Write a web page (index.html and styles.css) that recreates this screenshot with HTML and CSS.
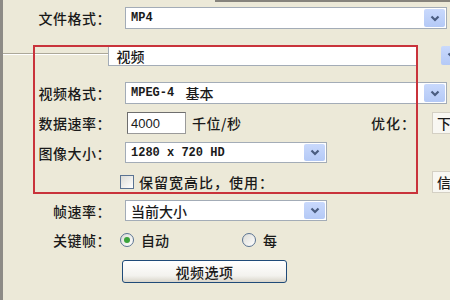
FILE: index.html
```html
<!DOCTYPE html>
<html lang="zh-CN">
<head>
    <meta charset="UTF-8">
    <meta name="viewport" content="width=device-width, initial-scale=1.0">
    <title>视频设置</title>
    <link rel="stylesheet" href="styles.css">
</head>
<body>
    <div class="panel">
        <!-- 文件格式 -->
        <div class="row row-file">
            <span class="label">文件格式：</span>
            <div class="select select-wide">
                <span class="value mono">MP4</span>
                <span class="drop"><svg width="10" height="7" viewBox="0 0 10 7"><path d="M1.5 1.5l3.5 3.5l3.5-3.5" fill="none" stroke="#4a5d80" stroke-width="2.2"/></svg></span>
            </div>
        </div>

        <!-- 分组 -->
        <div class="row row-group">
            <div class="rule"></div>
            <div class="select select-group">
                <span class="value">视频</span>
            </div>
            <span class="drop drop-loose"><svg width="10" height="7" viewBox="0 0 10 7"><path d="M1.5 1.5l3.5 3.5l3.5-3.5" fill="none" stroke="#4a5d80" stroke-width="2.2"/></svg></span>
        </div>

        <div class="row row-vformat">
            <span class="label">视频格式：</span>
            <div class="select select-wide">
                <span class="value mono">MPEG-4 <span class="cjk">基本</span></span>
                <span class="drop"><svg width="10" height="7" viewBox="0 0 10 7"><path d="M1.5 1.5l3.5 3.5l3.5-3.5" fill="none" stroke="#4a5d80" stroke-width="2.2"/></svg></span>
            </div>
        </div>

        <div class="row row-rate">
            <span class="label">数据速率：</span>
            <div class="textbox">4000</div>
            <span class="unit">千位/秒</span>
            <span class="label-right">优化：</span>
            <div class="side-box">下</div>
        </div>

        <div class="row row-size">
            <span class="label">图像大小：</span>
            <div class="select select-mid">
                <span class="value mono">1280 x 720 HD</span>
                <span class="drop"><svg width="10" height="7" viewBox="0 0 10 7"><path d="M1.5 1.5l3.5 3.5l3.5-3.5" fill="none" stroke="#4a5d80" stroke-width="2.2"/></svg></span>
            </div>
        </div>

        <div class="row row-keep">
            <span class="label"></span>
            <span class="checkbox"></span>
            <span class="check-text">保留宽高比，使用：</span>
            <div class="side-box side-box-far">信</div>
        </div>

        <div class="row row-fps">
            <span class="label">帧速率：</span>
            <div class="select select-mid">
                <span class="value">当前大小</span>
                <span class="drop"><svg width="10" height="7" viewBox="0 0 10 7"><path d="M1.5 1.5l3.5 3.5l3.5-3.5" fill="none" stroke="#4a5d80" stroke-width="2.2"/></svg></span>
            </div>
        </div>

        <div class="row row-key">
            <span class="label">关键帧：</span>
            <span class="radio checked"></span>
            <span class="radio-text">自动</span>
            <span class="radio radio-second"></span>
            <span class="radio-text">每</span>
        </div>

        <div class="row row-btn">
            <span class="label"></span>
            <button class="btn">视频选项</button>
        </div>
    </div>

    <!-- 红框标注 -->
    <div class="highlight"></div>
</body>
</html>
```

FILE: styles.css
```css
body {
    margin: 0;
    width: 450px;
    height: 300px;
    overflow: hidden;
    background: linear-gradient(#86837c, #86837c) no-repeat 215px 0 / 100% 2px, #ece9d8;
    font-family: "Noto Sans CJK SC", sans-serif;
    font-size: 14px;
    font-weight: 500;
    color: #1a1a1a;
    line-height: 1;
}
.panel {
    width: 459px;
    height: 300px;
    border-left: 3px solid #8d8b86;
    display: flex;
    flex-direction: column;
}
.row {
    display: flex;
    align-items: center;
    height: 22px;
    flex-shrink: 0;
}
.row-file { margin-top: 7px; }
.row-group { margin-top: 16px; height: 21px; }
.row-vformat { margin-top: 16px; }
.row-rate { margin-top: 8px; }
.row-size { margin-top: 8px; height: 21px; }
.row-keep { margin-top: 8px; height: 21px; }
.row-fps { margin-top: 8px; height: 21px; }
.row-key { margin-top: 10px; height: 18px; }
.row-btn { margin-top: 11px; height: 23px; }

.label {
    width: 108px;
    margin-right: 9px;
    text-align: right;
    letter-spacing: 0.5px;
    flex-shrink: 0;
}

/* 下拉框 */
.select {
    display: flex;
    height: 100%;
    box-sizing: border-box;
    border: 1px solid #a3acb7;
    background: #fff;
    margin-left: 5px;
}
.select .value {
    flex: 1;
    display: flex;
    align-items: center;
    padding-left: 5px;
    white-space: pre;
}
.select-wide { width: 322px; }
.select-mid { width: 202px; }
.select-group {
    width: 310px;
    margin-left: 0;
    border-right: none;
}
.select-group .value { padding-left: 8px; }
.mono {
    font-family: "Liberation Mono", monospace;
    font-size: 12px;
    font-weight: bold;
}
.cjk {
    font-family: "Noto Sans CJK SC", sans-serif;
    font-size: 14px;
    font-weight: 500;
    margin-left: 4px;
}
.drop {
    width: 21px;
    margin: 1px;
    border-radius: 2px;
    background: linear-gradient(#c9d9fc, #b4c9f6);
    display: flex;
    align-items: center;
    justify-content: center;
}
.drop-loose {
    height: 19px;
    margin: 0 0 0 25px;
}

.rule {
    width: 105px;
    height: 0;
    align-self: flex-start;
    margin-top: 8px;
    border-top: 1px solid #aca899;
    border-bottom: 1px solid #fff;
}

/* 数据速率 */
.textbox {
    width: 59px;
    height: 22px;
    box-sizing: border-box;
    margin-left: 7px;
    border: 1px solid #9a9a9a;
    border-top-color: #6e6e6e;
    border-left-color: #6e6e6e;
    background: #fff;
    font-family: "Liberation Sans", sans-serif;
    font-size: 13px;
    font-weight: normal;
    display: flex;
    align-items: center;
    padding-left: 3px;
}
.unit {
    margin-left: 6px;
    letter-spacing: 0.5px;
}
.label-right {
    margin-left: auto;
    letter-spacing: 1px;
}
.side-box {
    width: 30px;
    height: 22px;
    box-sizing: border-box;
    margin-left: 16px;
    border: 1px solid #d4d0c4;
    background: #f8f7f2;
    display: flex;
    align-items: center;
    padding-left: 4px;
}
.side-box-far { margin-left: auto; }

/* 复选框、单选框 */
.checkbox {
    width: 14px;
    height: 14px;
    box-sizing: border-box;
    border: 1px solid #5a7392;
    background: linear-gradient(135deg, #dcdcd6, #fff);
}
.check-text {
    margin-left: 5px;
    letter-spacing: 1px;
}
.radio {
    width: 14px;
    height: 14px;
    box-sizing: border-box;
    border: 1px solid #5a7392;
    border-radius: 50%;
    background: linear-gradient(135deg, #dcdcd6, #fff);
    display: flex;
    align-items: center;
    justify-content: center;
}
.radio.checked::after {
    content: "";
    width: 6px;
    height: 6px;
    border-radius: 50%;
    background: #3aa33a;
}
.radio-text {
    margin-left: 7px;
}
.radio-second {
    margin-left: 73px;
}

/* 按钮 */
.btn {
    margin-left: 2px;
    width: 165px;
    height: 23px;
    border: 1px solid #1f4a78;
    border-radius: 3px;
    background: linear-gradient(#fff, #f3f2ee 70%, #d9d5ca);
    font-family: "Noto Sans CJK SC", sans-serif;
    font-size: 14px;
    font-weight: 500;
    color: #1a1a1a;
    letter-spacing: 0.5px;
    padding: 0;
}

.highlight {
    position: absolute;
    left: 33px;
    top: 45px;
    width: 385px;
    height: 149px;
    box-sizing: border-box;
    border: 2px solid #c9333b;
}
```
